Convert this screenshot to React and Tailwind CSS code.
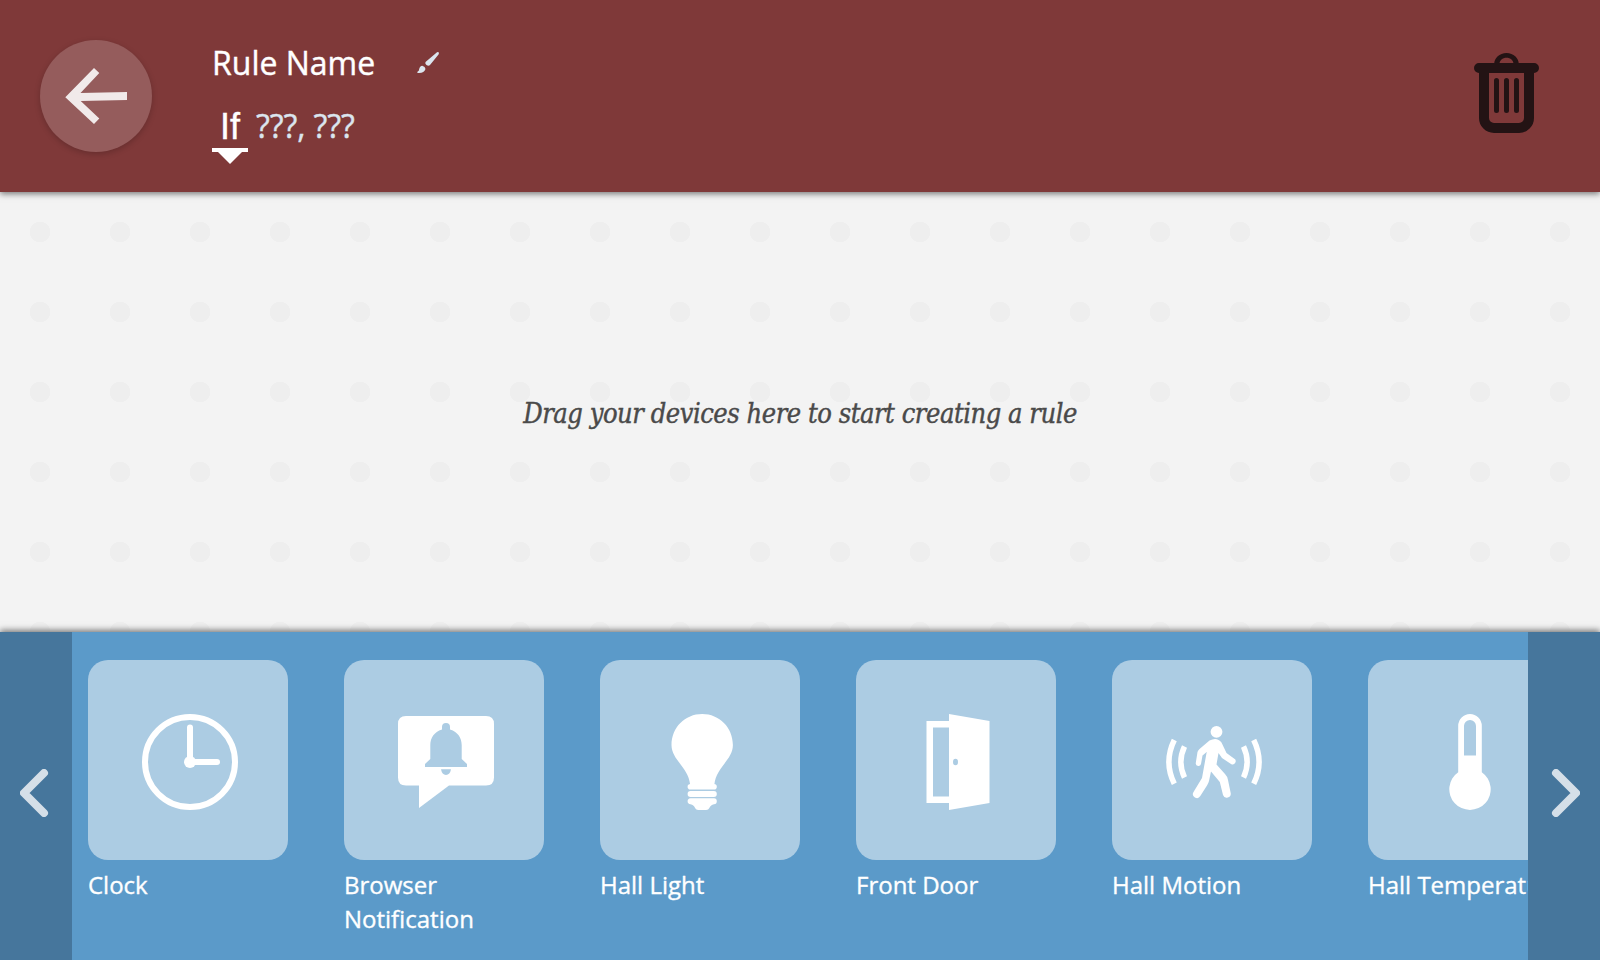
const ICONS = {
  clock: (
    <g fill="none" stroke="white" strokeWidth="6" strokeLinecap="round">
      <circle cx="48" cy="48" r="45" />
      <path d="M48 13.500V48H75" />
      <circle cx="48" cy="48" r="6" fill="white" stroke="none" />
    </g>
  ),
  notification: (
    <g>
      <path fill="white" d="M8 2H88Q96 2 96 10V63.500Q96 71.500 88 71.500H51L21 94V71.500H8Q0 71.500 0 63.500V10Q0 2 8 2Z" />
      <path fill="#accce3" d="M44 15.500V13Q44 9 48 9T52 13V15.500C60 18 63.700 24 63.700 31V45L69 50V53H27V50L32.300 45V31C32.300 24 36 18 44 15.500ZM43 55.300H53Q52 61 48 61T43 55.300Z" />
    </g>
  ),
  bulb: (
    <g fill="white">
      <path d="M48.200 0C31 0 17.500 13.500 17.500 31C17.500 46 34.500 53 36.200 71H60.300C62 53 78.900 46 78.900 31C78.900 13.500 65.400 0 48.200 0Z" />
      <rect x="33.600" y="69.900" width="29.200" height="5.700" rx="2.800" />
      <rect x="33.600" y="77" width="29.200" height="5.900" rx="2.900" />
      <path d="M36.500 84.300H60Q62.800 84.300 62.800 87.300T60 90.300C55 91 56.500 96 52 96H44.500C40 96 41.500 91 36.500 90.300Q33.600 90 33.600 87.300T36.500 84.300Z" />
    </g>
  ),
  door: (
    <g>
      <path fill="white" fillRule="evenodd" d="M16.500 7H39V0L79.500 7V89L39 96V89H16.500ZM23 13.500V82.500H39V13.500Z" />
      <ellipse cx="45.500" cy="48" rx="2.500" ry="3.200" fill="#accce3" />
    </g>
  ),
  motion: (
    <g fill="none" stroke="white">
      <circle cx="50.500" cy="17.800" r="5.900" fill="white" stroke="none" />
      <path fill="white" stroke="none" d="M43.500 26.500Q51 22.500 55.500 28.500L60.500 39L68 44.500A2.800 2.800 0 0 1 65 50L56 44L52.500 39L50.500 50.500L59 60Q61.500 62.500 62 66L64.700 79A4 4 0 0 1 57 81L53.800 68L45 57.500L43 67Q42.500 69 41 71.500L34.300 82A3.900 3.900 0 0 1 27.500 78L36 64L40.700 38L36.500 41.500L35 50A2.700 2.700 0 0 1 29.700 49.500L31.500 38Q32 36.500 33.500 35Z" />
      <path strokeWidth="5.500" d="M8.300 26Q-2.500 48 8.300 69.800M18.500 32.500Q11.200 48 18.500 63.500M77.500 32.500Q84.800 48 77.500 63.500M87.700 26Q98.500 48 87.700 69.800" />
    </g>
  ),
  thermometer: (
    <path fill="white" fillRule="evenodd" d="M36.200 58.200V12A11.800 12 0 0 1 59.800 12V58.200A20.700 20.700 0 1 1 36.200 58.200ZM42 12V41.500H54V12A6 6 0 0 0 42 12Z" />
  ),
};

const DEVICES = [
  { name: 'Clock', icon: 'clock' },
  { name: 'Browser Notification', icon: 'notification' },
  { name: 'Hall Light', icon: 'bulb' },
  { name: 'Front Door', icon: 'door' },
  { name: 'Hall Motion', icon: 'motion' },
  { name: 'Hall Temperature', icon: 'thermometer', nowrap: true },
];

function Device({ name, icon, nowrap }) {
  return (
    <div className="w-[200px] shrink-0">
      <div className="h-[200px] rounded-[20px] bg-[#accce3] pt-[54px] pl-[54px]">
        <svg className="size-24" viewBox="0 0 96 96">{ICONS[icon]}</svg>
      </div>
      <p className={`mt-2 text-[24px] leading-[34px] text-white [-webkit-text-stroke:0.35px_white] ${nowrap ? 'whitespace-nowrap' : ''}`}>{name}</p>
    </div>
  );
}

function ScrollButton({ direction }) {
  return (
    <button className="flex w-[72px] shrink-0 items-center justify-center bg-[#46769c]" aria-label={`Scroll ${direction}`}>
      <svg className="mt-[-6px] h-12 w-8" viewBox="0 0 32 48" fill="none" stroke="#d5dfe8" strokeWidth="8" strokeLinecap="round" strokeLinejoin="round">
        {direction === 'left' ? <path d="M24 4L4 24L24 44" /> : <path d="M8 4L28 24L8 44" />}
      </svg>
    </button>
  );
}

export default function App() {
  return (
    <div className="flex h-[960px] w-[1600px] flex-col overflow-hidden bg-[#f3f3f3] font-['Open_Sans',sans-serif]">
      <header className="z-10 flex h-48 shrink-0 items-start bg-[#7f3939] shadow-[0_2px_6px_rgba(0,0,0,0.5)]">
        <button className="mt-10 ml-10 size-28 rounded-full bg-[#955c5c] shadow-[0_2px_6px_rgba(0,0,0,0.2)]" aria-label="Back">
          <svg className="size-28" viewBox="0 0 112 112" fill="#f1eaea">
            <path d="M25.300 57.300L54 28L59.300 33L40.500 53L87 52V60L40.700 61L59.300 78.500L54 84Z" />
          </svg>
        </button>
        <div className="mt-[41px] ml-[60px] flex flex-col">
          <div className="flex h-11 items-center">
            <h1 className="text-[32px] leading-[44px] text-white [-webkit-text-stroke:0.4px_white]">Rule Name</h1>
            <svg className="ml-[42px] size-[22px]" viewBox="0 0 22 22" fill="#dbe5ee">
              <path d="M20 0.300Q22.500 -0.500 21.700 2.300L13 13Q11.500 14.500 9.500 13Q7.500 11.500 8.800 9.800ZM5.300 13.800Q8.300 14.500 8.500 17Q7 21.500 1 21Q-0.800 20.500 0.800 19.500Q2 19 2.200 17Q2.800 14 5.300 13.800Z" />
            </svg>
          </div>
          <div className="mt-[17px] flex items-start">
            <div className="flex w-9 flex-col items-center">
              <span className="h-[46px] font-['Liberation_Sans',sans-serif] text-[36px] leading-[49px] text-white [-webkit-text-stroke:0.4px_white]">If</span>
              <span className="h-1 w-9 bg-white" />
              <svg className="h-3 w-6" viewBox="0 0 24 12" fill="white"><path d="M0 0H24L12 12Z" /></svg>
            </div>
            <span className="ml-2 text-[32px] leading-[48px] tracking-[-0.1px] text-[#dbe5ee] [-webkit-text-stroke:0.4px_#dbe5ee]">???, ???</span>
          </div>
        </div>
        <svg className="mt-[53px] mr-[61px] ml-auto h-20 w-[65px]" viewBox="0 0 65 80" fill="#231314">
          <path d="M20.200 11C20.200 5 25.500 0 32.500 0S44.800 5 44.800 11H39.500C39.500 7.500 36.500 4.800 32.500 4.800S25.500 7.500 25.500 11Z" />
          <path fillRule="evenodd" d="M5 10H60A5 5 0 0 1 60 20V65A15 15 0 0 1 45 80H20A15 15 0 0 1 5 65V20A5 5 0 0 1 5 10ZM15 20V65A5 5 0 0 0 20 70H45A5 5 0 0 0 50 65V20Z" />
          <path stroke="#231314" strokeWidth="5" strokeLinecap="round" d="M22.500 27.500V57.500M32.500 27.500V57.500M42.500 27.500V57.500" />
        </svg>
      </header>
      <main className="flex h-[440px] shrink-0 items-center justify-center bg-[radial-gradient(circle_at_center,#eeeeee_10px,transparent_10.5px)] bg-[length:80px_80px]">
        <p className="pt-1 font-['DejaVu_Serif_Condensed','DejaVu_Serif',serif] text-[27px] tracking-[-0.46px] whitespace-nowrap text-[#4a4a4a] italic [-webkit-text-stroke:0.4px_#4a4a4a]">
          Drag your devices here to start creating a rule
        </p>
      </main>
      <footer className="z-10 flex h-[328px] shrink-0 bg-[#5b9ac9] shadow-[0_-2px_6px_rgba(0,0,0,0.5)]">
        <ScrollButton direction="left" />
        <div className="flex min-w-0 flex-1 gap-14 overflow-hidden pt-7 pl-4">
          {DEVICES.map((d) => <Device key={d.name} {...d} />)}
        </div>
        <ScrollButton direction="right" />
      </footer>
    </div>
  );
}
